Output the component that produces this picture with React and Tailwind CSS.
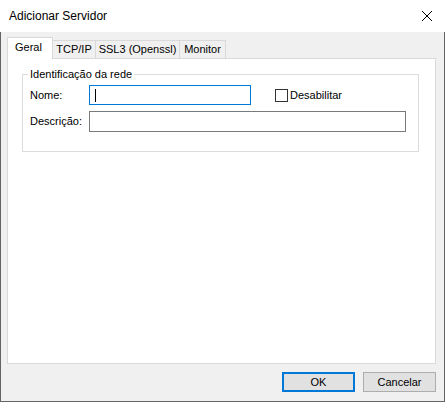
import React from 'react';

const font = { fontFamily: '"Liberation Sans", Arial, sans-serif' };

const tabs = ['TCP/IP', 'SSL3 (Openssl)', 'Monitor'];
const tabWidths = ['w-[43px]', 'w-[84px]', 'w-[46px]'];

const App = () => {
  return (
    <div
      className="w-[445px] h-[402px] flex flex-col bg-white text-[11px] text-black leading-none"
      style={font}
    >
      {/* title bar */}
      <div className="h-[32px] flex items-center justify-between pl-[9px] pr-[11px] bg-white">
        <span className="text-[12px]">Adicionar Servidor</span>
        <svg width="12" height="12" viewBox="0 0 12 12" className="mr-[1px]">
          <path d="M1 1 L11 11 M11 1 L1 11" stroke="#000" strokeWidth="1" />
        </svg>
      </div>

      {/* body */}
      <div className="flex-1 flex flex-col bg-[#f0f0f0] border-x border-b border-[#646464] pl-[6px] pr-[8px] pt-[5px]">
        {/* tabs */}
        <div className="flex items-end h-[21px]">
          <div className="w-[46px] h-[22px] -mb-px relative z-10 bg-white border border-b-0 border-[#d9d9d9] flex items-center pl-[7px] pb-[2px]">
            Geral
          </div>
          {tabs.map((t, i) => (
            <div
              key={t}
              className={`${tabWidths[i]} h-[18px] border border-l-0 border-b-0 border-[#d9d9d9] flex items-center justify-center pb-[1px]`}
            >
              {t}
            </div>
          ))}
        </div>

        {/* panel */}
        <div className="h-[306px] bg-white border border-[#d9d9d9] pl-[14px] pr-[16px] pt-[8px]">
          <fieldset className="h-[85px] border border-[#dcdcdc] pl-[7px] pr-[11px]">
            <legend className="-ml-[2px] px-[2px] leading-[14px]">Identificação da rede</legend>
            <div className="flex items-center h-[20px] mt-[4px]">
              <span className="w-[59px]">Nome:</span>
              <div className="w-[162px] h-[20px] border border-[#0078d7] flex items-center pl-[5px]">
                <div className="w-px h-[13px] bg-black" />
              </div>
              <label className="flex items-center ml-[24px]">
                <span className="w-[13px] h-[13px] border border-[#333] bg-white" />
                <span className="ml-[2px]">Desabilitar</span>
              </label>
            </div>
            <div className="flex items-center h-[21px] mt-[6px]">
              <span className="w-[59px]">Descrição:</span>
              <div className="w-[317px] h-[21px] border border-[#7a7a7a] bg-white" />
            </div>
          </fieldset>
        </div>

        {/* buttons */}
        <div className="flex justify-end gap-[8px] mt-[8px]">
          <button className="w-[73px] h-[20px] bg-[#e1e1e1] border-2 border-[#0078d7] flex items-center justify-center">
            OK
          </button>
          <button className="w-[73px] h-[20px] bg-[#e1e1e1] border border-[#adadad] flex items-center justify-center">
            Cancelar
          </button>
        </div>
      </div>
    </div>
  );
};

export default App;
